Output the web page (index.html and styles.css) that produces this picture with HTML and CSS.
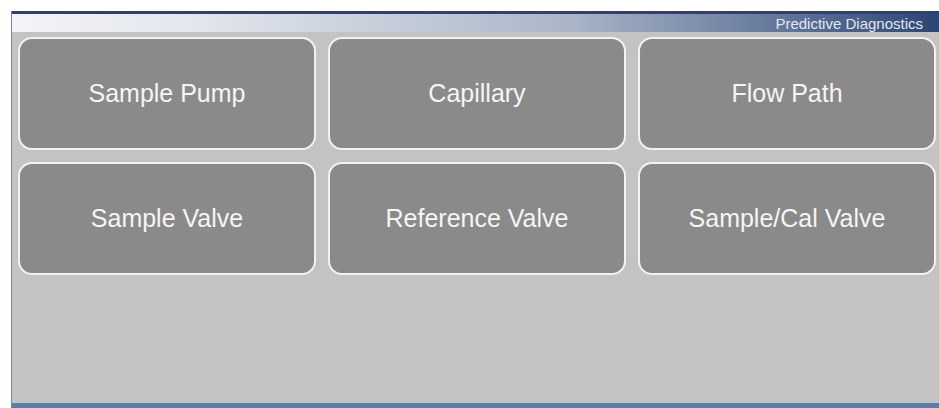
FILE: index.html
```html
<!DOCTYPE html>
<html>
<head>
<meta charset="utf-8">
<link rel="stylesheet" href="styles.css">
</head>
<body>
<div class="frame">
  <div class="titlebar"><span class="title">Predictive Diagnostics</span></div>
  <div class="content">
    <div class="grid">
      <div class="btn">Sample Pump</div>
      <div class="btn">Capillary</div>
      <div class="btn">Flow Path</div>
      <div class="btn">Sample Valve</div>
      <div class="btn">Reference Valve</div>
      <div class="btn">Sample/Cal Valve</div>
    </div>
  </div>
  <div class="footer"></div>
</div>
</body>
</html>
```
FILE: styles.css
```css
html, body {
  margin: 0;
  padding: 0;
  background: #ffffff;
  font-family: "Liberation Sans", Arial, sans-serif;
}
.frame {
  margin: 11px 0 0 11px;
  width: 928px;
  height: 397px;
  display: flex;
  flex-direction: column;
  border-left: 1px solid #6f88a3;
  box-sizing: border-box;
}
.titlebar {
  height: 21px;
  border-top: 3px solid #2c4272;
  box-sizing: border-box;
  background: linear-gradient(to right, #f3f4f7 0%, #e2e6ed 20%, #cdd4df 35%, #aab6c8 60%, #6c7fa0 80%, #2d4474 100%);
  display: flex;
  justify-content: flex-end;
  align-items: center;
  padding-right: 16px;
}
.title {
  color: #e2e7f2;
  font-size: 15px;
  line-height: 18px;
  padding-top: 1px;
}
.content {
  flex: 1;
  background: #c3c3c3;
  padding: 5px 3px 0 6px;
  box-sizing: border-box;
}
.grid {
  display: grid;
  grid-template-columns: repeat(3, 1fr);
  grid-auto-rows: 113px;
  column-gap: 12px;
  row-gap: 12px;
}
.btn {
  background: #8a8a8a;
  border: 2px solid #f2f2f2;
  border-radius: 14px;
  box-sizing: border-box;
  display: flex;
  align-items: center;
  justify-content: center;
  color: #f5f5f5;
  font-size: 25px;
}
.footer {
  height: 5px;
  border-top: 1px solid #b7c9da;
  background: #5b7fa4;
}
```
